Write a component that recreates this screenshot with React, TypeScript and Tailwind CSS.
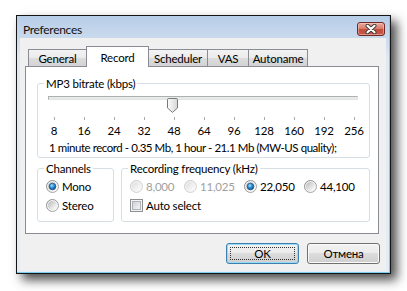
import { useId } from "react";

function useSvgId() {
  return useId().replace(/[^a-zA-Z0-9]/g, "");
}

function Radio({ checked = false, disabled = false }: { checked?: boolean; disabled?: boolean }) {
  const id = useSvgId();
  return (
    <svg width="13" height="13" viewBox="0 0 13 13" className="shrink-0">
      <defs>
        <linearGradient id={`${id}o`} x1="0" y1="0" x2="1" y2="1">
          <stop offset="0" stopColor={disabled ? "#c6c6c6" : "#858585"} />
          <stop offset="1" stopColor={disabled ? "#dadada" : "#b0b0b0"} />
        </linearGradient>
        <linearGradient id={`${id}i`} x1="0.15" y1="0.15" x2="0.85" y2="0.85">
          <stop offset="0" stopColor={disabled ? "#e2e2e2" : "#c4c4c4"} />
          <stop offset="1" stopColor="#fafafa" />
        </linearGradient>
        <radialGradient id={`${id}d`} cx="0.4" cy="0.35" r="0.75">
          <stop offset="0" stopColor="#a6e3ff" />
          <stop offset="0.45" stopColor="#2d8fd6" />
          <stop offset="1" stopColor="#0c3b70" />
        </radialGradient>
      </defs>
      <circle cx="6.5" cy="6.5" r="6" fill="#f3f3f3" stroke={`url(#${id}o)`} />
      <circle cx="6.5" cy="6.5" r="4.6" fill={`url(#${id}i)`} />
      {checked && (
        <circle cx="6.5" cy="6.5" r="3.3" fill={`url(#${id}d)`} stroke="#1b4b80" strokeWidth="0.7" />
      )}
    </svg>
  );
}

function Checkbox() {
  const id = useSvgId();
  return (
    <svg width="13" height="13" viewBox="0 0 13 13" className="shrink-0">
      <defs>
        <linearGradient id={`${id}c`} x1="0" y1="0" x2="1" y2="1">
          <stop offset="0" stopColor="#cbcfd5" />
          <stop offset="1" stopColor="#f7f7f7" />
        </linearGradient>
      </defs>
      <rect x="0.5" y="0.5" width="12" height="12" fill="#f4f4f4" stroke="#8e8f8f" />
      <rect x="2.5" y="2.5" width="8" height="8" fill={`url(#${id}c)`} stroke="#aeb3b9" />
    </svg>
  );
}

function SliderThumb() {
  const id = useSvgId();
  return (
    <svg width="11" height="15" viewBox="0 0 11 15">
      <defs>
        <linearGradient id={`${id}t`} x1="0" y1="0" x2="1" y2="0">
          <stop offset="0" stopColor="#fdfdfd" />
          <stop offset="1" stopColor="#d6d6d6" />
        </linearGradient>
      </defs>
      <path
        d="M0.5 1.8 Q0.5 0.5 1.8 0.5 H9.2 Q10.5 0.5 10.5 1.8 V10 L5.5 14.4 L0.5 10 Z"
        fill={`url(#${id}t)`}
        stroke="#7a7a7a"
      />
    </svg>
  );
}

function CloseButton() {
  return (
    <div className="mt-[6px] w-[28px] h-[14px] rounded-[3px] border border-[#6e2a24] bg-[linear-gradient(to_bottom,#eaa99a_0%,#d9806f_45%,#c44c3b_55%,#c95a4b_100%)] shadow-[inset_0_0_0_1px_rgba(255,220,210,0.45)] flex items-center justify-center">
      <svg width="12" height="10" viewBox="0 0 12 10">
        <path d="M2.5 1.8 L9.5 8.2 M9.5 1.8 L2.5 8.2" stroke="#3a3a3a" strokeWidth="4" strokeLinecap="round" />
        <path d="M2.5 1.8 L9.5 8.2 M9.5 1.8 L2.5 8.2" stroke="#ffffff" strokeWidth="2.2" strokeLinecap="round" />
      </svg>
    </div>
  );
}

const tabs = [
  { label: "General", w: "w-[59px]" },
  { label: "Record", w: "w-[63px]", active: true },
  { label: "Scheduler", w: "w-[60px]" },
  { label: "VAS", w: "w-[42px]" },
  { label: "Autoname", w: "w-[60px]" },
];

const rates = ["8", "16", "24", "32", "48", "64", "96", "128", "160", "192", "256"];

export default function App() {
  return (
    <div className="w-[407px] h-[291px] bg-white pl-[16px] pt-[15px] font-['Lato',sans-serif] text-[11.5px] tracking-[-0.2px] text-black">
      <div className="w-[375px] h-[259px] border border-[#151515] shadow-[6px_6px_10px_rgba(0,0,0,0.7)]">
        <div className="h-full flex flex-col border-r border-b border-[#7dcff0] bg-[linear-gradient(to_bottom,#b6cde8_0px,#cadaed_22px,#dfe8f3_40px,#e4edf7_100%)]">
          {/* Title bar */}
          <div className="h-[22px] flex items-start justify-between pl-[6px] pr-[4px]">
            <span className="mt-[6px] leading-[15px] text-[12px] tracking-[-0.3px] text-[#111]">Preferences</span>
            <CloseButton />
          </div>

          {/* Client area */}
          <div className="mx-[3px] mb-[1px] h-[233px] bg-[#f0f0f0] pl-[5px] pt-[8px]">
            {/* Tabs */}
            <div className="ml-[3px] h-[20px] flex items-end">
              {tabs.map((t, i) =>
                t.active ? (
                  <div
                    key={t.label}
                    className={`${t.w} ${i > 0 ? "-ml-[1px]" : ""} relative z-10 h-[21px] -mb-[1px] border border-b-0 border-[#898c95] bg-white flex items-center justify-center leading-[15px]`}
                  >
                    {t.label}
                  </div>
                ) : (
                  <div
                    key={t.label}
                    className={`${t.w} ${i > 0 ? "-ml-[1px]" : ""} h-[17px] border border-b-0 border-[#898c95] bg-[linear-gradient(to_bottom,#f3f3f3_0%,#ebebeb_50%,#dddddd_50%,#d3d3d3_100%)] flex items-center justify-center leading-[15px] pt-[1px]`}
                  >
                    {t.label}
                  </div>
                )
              )}
            </div>

            {/* Tab panel */}
            <div className="w-[354px] h-[168px] border border-[#898c95] bg-white pl-[11px] pt-[9px]">
              <fieldset className="w-[333px] border border-[#d5dfe5] rounded-[3px] pb-[2px]">
                <legend className="ml-[6px] px-[2px] leading-[15px]">MP3 bitrate (kbps)</legend>

                {/* Slider */}
                <div className="relative ml-[10px] mt-[5px] w-[310px] h-[18px]">
                  <div className="mt-[5px] h-[4px] border border-[#b0b0b0] border-b-[#e3e3e3] border-r-[#e3e3e3] bg-[#e7eaea]" />
                  <div className="absolute left-[119px] top-[2px]">
                    <SliderThumb />
                  </div>
                </div>

                {/* Ticks */}
                <div className="ml-[1px] mt-[3px] grid grid-cols-[repeat(11,30px)]">
                  {rates.map((r) => (
                    <div key={r} className="h-[3px] flex justify-center">
                      <div className="w-px h-[3px] bg-[#a9a9a9]" />
                    </div>
                  ))}
                </div>
                <div className="ml-[1px] mt-[3px] grid grid-cols-[repeat(11,30px)] leading-[15px]">
                  {rates.map((r) => (
                    <div key={r} className="text-center">
                      {r}
                    </div>
                  ))}
                </div>

                <div className="ml-[11px] mt-[2px] leading-[15px] whitespace-nowrap tracking-[-0.45px]">
                  1 minute record - 0.35 Mb, 1 hour - 21.1 Mb (MW-US quality);
                </div>
              </fieldset>

              <div className="mt-[3px] flex gap-[7px]">
                {/* Channels */}
                <fieldset className="w-[77px] border border-[#d5dfe5] rounded-[3px] pb-[6px]">
                  <legend className="ml-[6px] px-[2px] leading-[15px]">Channels</legend>
                  <div className="mt-[1px] h-[19px] flex items-center gap-[3px] pl-[8px]">
                    <Radio checked />
                    <span className="leading-[15px]">Mono</span>
                  </div>
                  <div className="h-[19px] flex items-center gap-[3px] pl-[8px]">
                    <Radio />
                    <span className="leading-[15px]">Stereo</span>
                  </div>
                </fieldset>

                {/* Recording frequency */}
                <fieldset className="w-[249px] border border-[#d5dfe5] rounded-[3px] pb-[6px]">
                  <legend className="ml-[6px] px-[2px] leading-[15px]">Recording frequency (kHz)</legend>
                  <div className="mt-[1px] h-[19px] pl-[8px] grid grid-cols-[54px_60px_60px_auto] items-center">
                    <div className="flex items-center gap-[3px] text-[#a0a0a0]">
                      <Radio disabled />
                      <span className="leading-[15px]">8,000</span>
                    </div>
                    <div className="flex items-center gap-[3px] text-[#a0a0a0]">
                      <Radio disabled />
                      <span className="leading-[15px]">11,025</span>
                    </div>
                    <div className="flex items-center gap-[3px]">
                      <Radio checked />
                      <span className="leading-[15px]">22,050</span>
                    </div>
                    <div className="flex items-center gap-[3px]">
                      <Radio />
                      <span className="leading-[15px]">44,100</span>
                    </div>
                  </div>
                  <div className="h-[19px] pl-[8px] flex items-center gap-[3px]">
                    <Checkbox />
                    <span className="leading-[15px]">Auto select</span>
                  </div>
                </fieldset>
              </div>
            </div>

            {/* Buttons */}
            <div className="mt-[9px] pr-[6px] flex justify-end gap-[8px]">
              <button className="relative w-[73px] h-[21px] rounded-[3px] border border-[#3c7fb1] bg-[linear-gradient(to_bottom,#f2f2f2_0%,#ebebeb_50%,#dddddd_50%,#cfcfcf_100%)] shadow-[inset_0_0_0_1px_#97dbf7] leading-[15px]">
                OK
                <span className="absolute inset-[3px] border border-dotted border-[#333]" />
              </button>
              <button className="w-[73px] h-[21px] rounded-[3px] border border-[#707070] bg-[linear-gradient(to_bottom,#f2f2f2_0%,#ebebeb_50%,#dddddd_50%,#cfcfcf_100%)] shadow-[inset_0_0_0_1px_#fbfbfb] leading-[15px]">
                Отмена
              </button>
            </div>
          </div>
        </div>
      </div>
    </div>
  );
}
